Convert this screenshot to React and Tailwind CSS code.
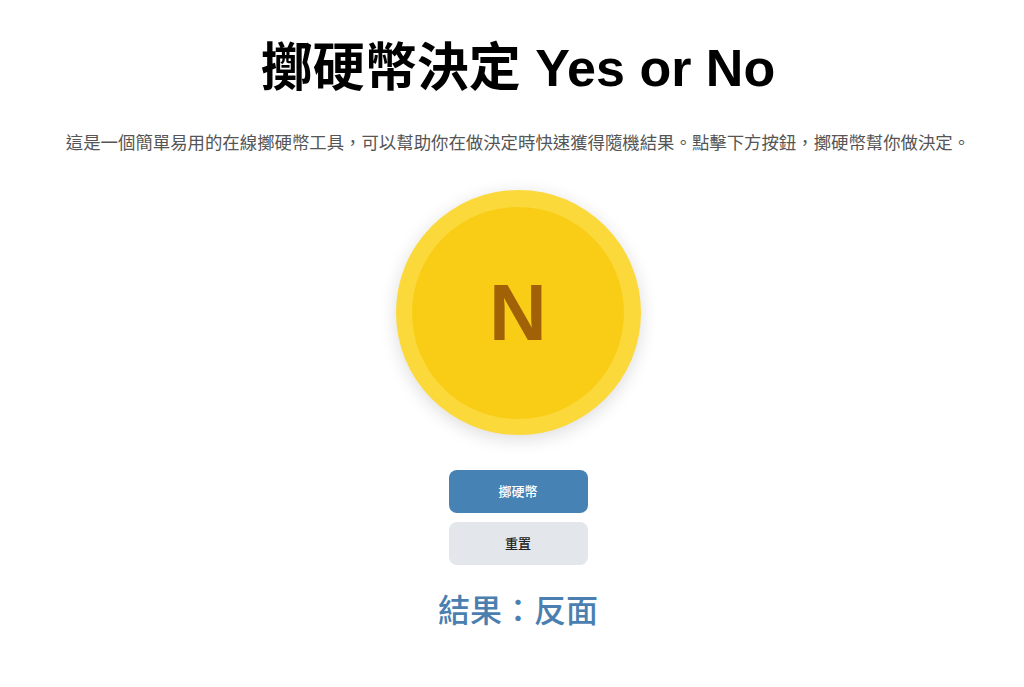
export default function App() {
  const font = { fontFamily: '"Liberation Sans", Arial, "Noto Sans CJK TC", sans-serif' };
  return (
    <div className="min-h-screen bg-white flex flex-col items-center pl-3" style={font}>
      <h1 className="mt-[37px] text-[52px] leading-[62px] font-bold text-black">擲硬幣決定 Yes or No</h1>
      <p className="mt-[32px] text-[17.4px] leading-[24px] text-[#555555]">
        這是一個簡單易用的在線擲硬幣工具，可以幫助你在做決定時快速獲得隨機結果。點擊下方按鈕，擲硬幣幫你做決定。
      </p>
      <div className="mt-[35px] w-[245px] h-[245px] rounded-full bg-[#fcd93a] shadow-[0_4px_18px_rgba(0,0,0,0.14)] flex items-center justify-center">
        <div className="w-[212px] h-[212px] rounded-full bg-[#f9cc16] flex items-center justify-center">
          <span className="text-[80px] leading-none font-bold text-[#a16207]">N</span>
        </div>
      </div>
      <button className="mt-[35px] w-[139px] h-[43px] rounded-lg bg-[#4682b4] text-white text-[13px] font-medium">擲硬幣</button>
      <button className="mt-[9px] w-[139px] h-[43px] rounded-lg bg-[#e3e6ea] text-[#222222] text-[13px] font-medium">重置</button>
      <div className="mt-[26px] text-[32px] leading-[40px] font-medium text-[#4a7fb0]">結果：反面</div>
    </div>
  );
}
